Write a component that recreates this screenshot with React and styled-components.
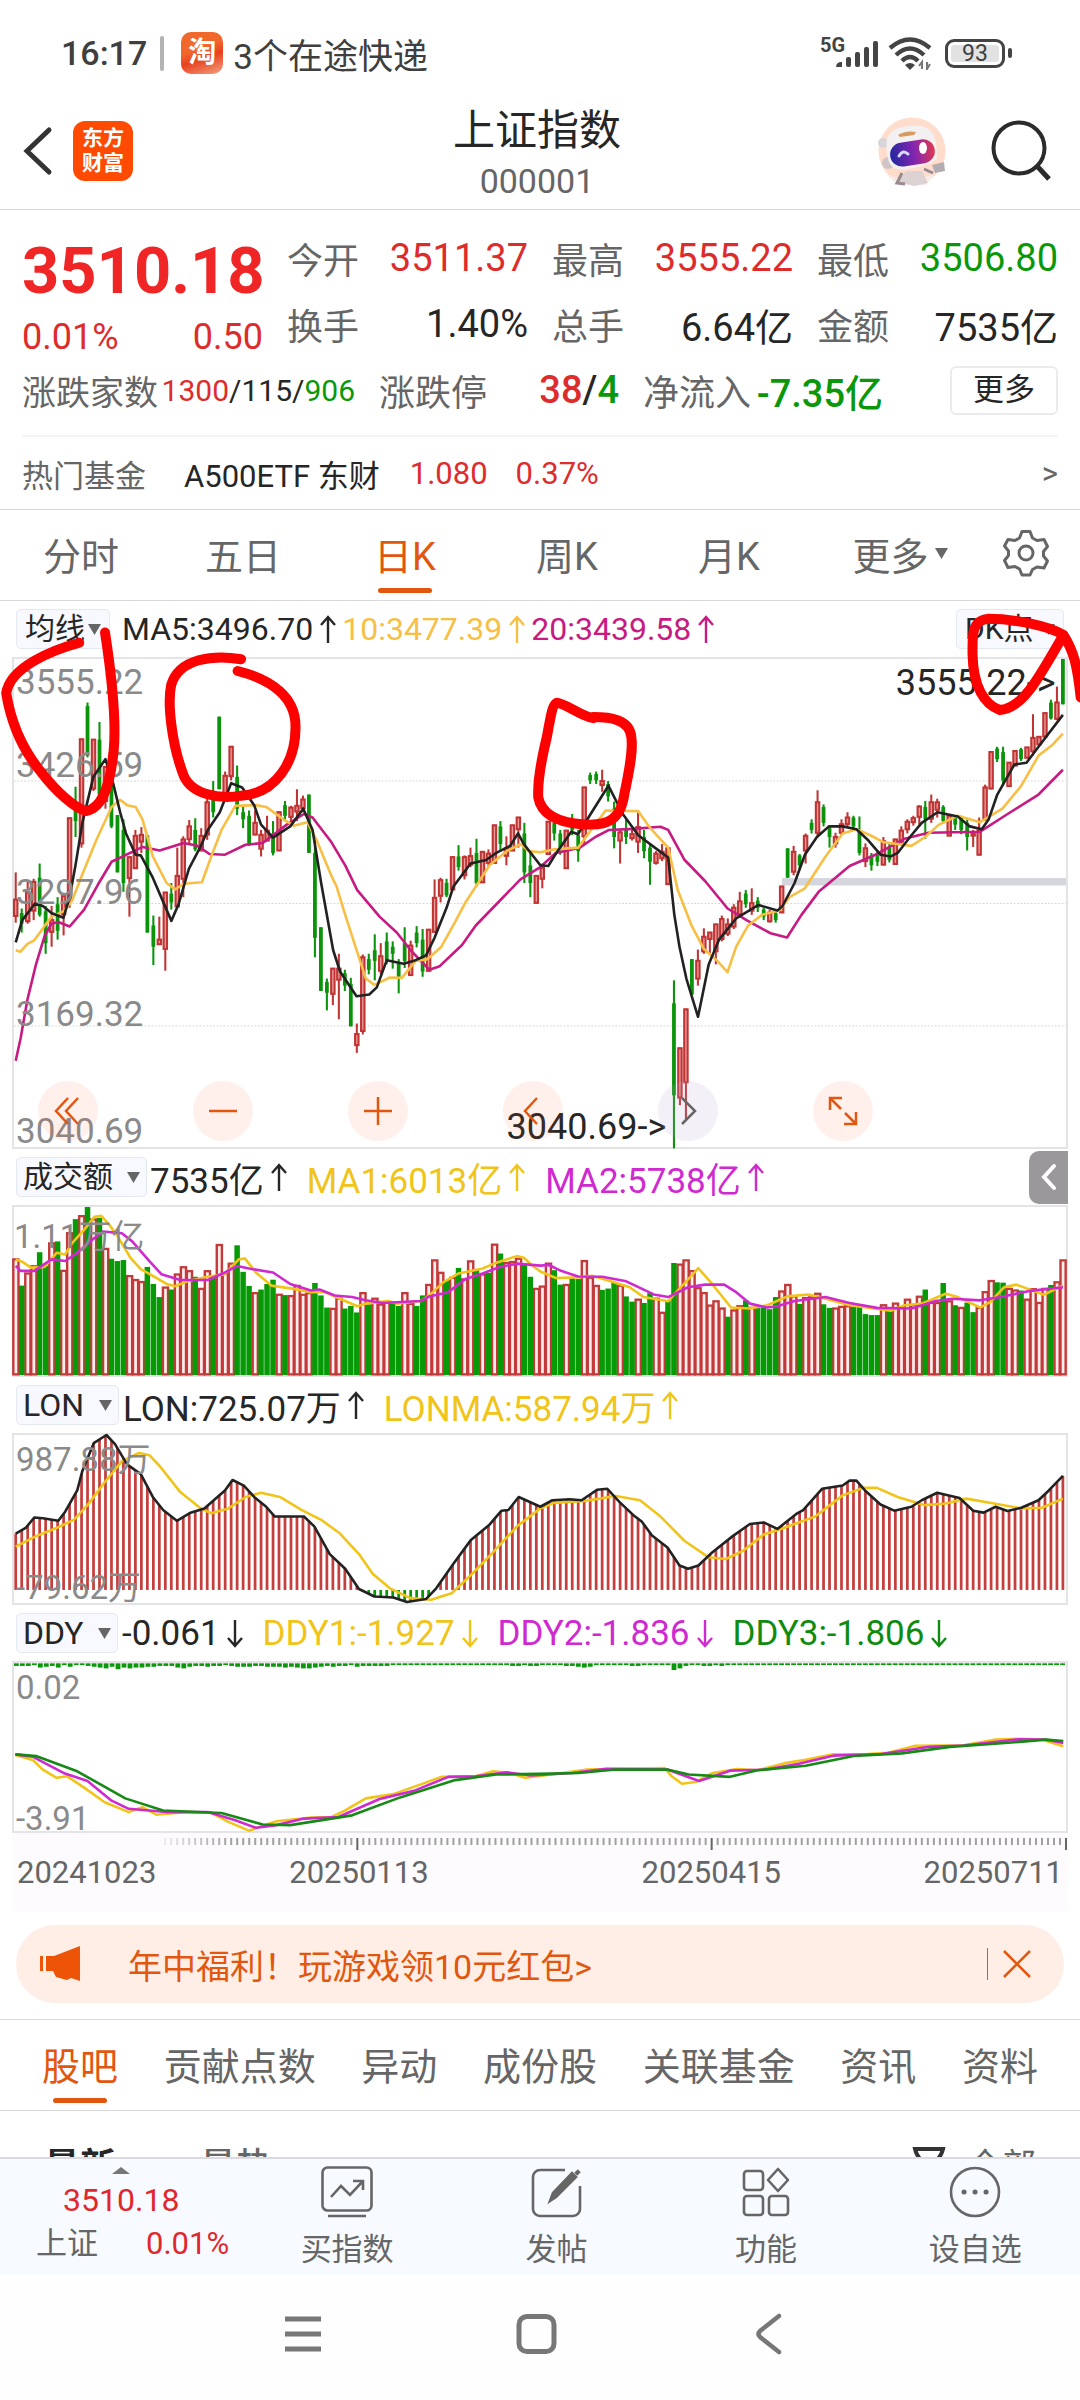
import React from "react";
import styled, { createGlobalStyle } from "styled-components";

const C = {
  ink: "#262626",
  sub: "#666666",
  axis: "#8a8a8a",
  red: "#dd2c2c",
  green: "#0a980a",
  orange: "#e2570f",
  yellow: "#f0c419",
  amber: "#f8bf45",
  violet: "#cf2ad0",
  magenta: "#c71a82",
  line: "#d8d8d8",
  chip: "#f7f9fe",
};

const Global = createGlobalStyle`
  *, *::before, *::after { box-sizing: border-box; }
  html, body { margin: 0; background: #fff; }
  body {
    font-family: Roboto, "Noto Sans CJK SC", sans-serif;
    color: ${C.ink};
    -webkit-font-smoothing: antialiased;
  }
  button, select { font: inherit; color: inherit; margin: 0; padding: 0; border: 0; background: none; }
  a { color: inherit; text-decoration: none; }
  dl, dd, dt, h1, p { margin: 0; font-weight: 400; }
  svg { display: block; }
`;

/* ---------- data ---------- */
const STEP = 3048 / 175;
const HALF = 1568;
const cx = (i) => 41 + STEP * i;
const parse = (s, off = 0) =>
  s.trim().split(/\s+/).map((p) => {
    const [x, y] = p.split(",").map(Number);
    return [x + off, y];
  });
const join = (left, right) => [...parse(left), ...parse(right, HALF)];
const toStr = (pts) => pts.map((p) => p.join(",")).join(" ");

const CANDLES = `R760,902,835,885 G862,930,875,905 R785,905,815,900 R778,895,785,870 G735,885,775,880 G855,990,870,960 R855,970,893,930 G830,950,850,925 R818,938,825,880 R605,860,605,840
G518,660,575,615 R382,690,382,680 G280,435,290,430 R383,530,383,525 G335,545,385,540 R460,580,460,560 G500,635,510,630 G598,760 G610,815,640,790 R715,885,715,778
R640,750,655,750 R632,705,652,675 G655,930 G882,1022,910,970 R885,965,948,965 R815,1038,815,978 G790,865,820,845 R690,858,768,858 R658,830,665,780 R612,680,628,668
G607,700,640,695 R635,700,655,700 R550,668,560,655 G502,605,550,590 G320,525 R475,540,485,540 R403,500,403,490 G458,598,490,580 G575,635,590,610 G585,685,600,680
R585,655,618,655 R640,715,652,695 R600,672,640,672 G615,712,650,705 R588,700 G558,610,570,600 R572,620,575,605 R525,615,570,590 R543,590,552,580 G540,705
G665,1000,705,945 G915,1095 G1060,1150,1070,1100 R1030,1135,1030,1105 R990,1175,1030,1065 G1035,1095,1045,1080 G1058,1195,1075,1195 R1187,1270,1215,1250 R992,1218,998,1210 G990,1048,1005,1035
G935,1065,980,1010 R960,1048,995,1040 G930,1020,955,1010 G955,1032,970,990 G1005,1102,1015,1060 G915,1030,960,1010 R953,1052,965,1052 G912,972,930,960 G920,1055,950,1040 R920,1040
R780,930,830,930 R775,845,780,828 G778,830,790,825 R715,810 G683,755,715,745 R712,780,715,770 R690,745,712,740 G665,800,705,790 R700,790 R695,745,705,735
R625,735 G615,700,630,680 R658,740,690,715 R625,700 R603,690,603,640 G620,790,650,760 G700,830,740,790 R768,848 R735,805,745,780 R615,710
G600,670,620,650 G640,710,650,690 R640,750 G595,655,610,640 G640,730,655,700 R518,680,518,660 G478,510,485,500 G475,510,482,500 R470,532,500,515 G502,560,510,545
G560,692,580,660 R640,735,645,672 G610,680,640,660 R640,670,650,665 R590,705,630,675 G640,720,660,700 G680,795,690,730 R700,738,705,735 R680,728,700,722 R690,795
G1065,1540,1130,1390 R1255,1418,1255,1398 R1145,1460,1145,1355 G1005,1105 R978,1080,1008,1062 R918,990,940,985 R928,990,928,950 R905,1020,905,985 R882,955,890,950 R890,940,905,935
R850,920,858,915 R815,885,840,880 G810,860,820,850 R805,880,845,870 G830,872,840,860 G860,895,865,885 R865,902,872,900 G870,902,875,895 R798,875 G692,775
R685,768,700,760 G708,750,712,740 R650,735,655,700 G610,650,620,640 R528,660,560,650 G568,630,575,620 G630,690,635,660 R648,690,658,680 R610,655,622,650 R590,630,603,625
G600,640,605,630 G602,712,640,705 R678,745,690,730 G705,755,712,740 G700,742,710,730 R660,740,670,740 G680,732,690,725 R665,738 R630,680,640,675 R610,650,615,640
R600,628,605,620 R570,625,572,605 G558,665,575,610 R540,620,560,610 R552,605,560,585 G570,622,575,615 R598,658 G600,640,605,625 G600,652,605,640 G610,698,620,660
R640,688,650,655 R605,712,640,712 R512,615,518,612 R418,525 G405,448,410,440 G405,515,420,500 R448,518 R415,460 G408,445,412,440 R405,438
R313,430,378,420 R375,400 R308,378 G272,328,280,325 R235,330,278,328 G157,285`
  .trim().split(/\s+/).map((t) => {
    const [h, l, o, c] = t.slice(1).split(",").map(Number);
    return { up: t[0] === "R", h, l, o: o ?? h, c: c ?? l };
  });

const VOLUMES = [352,435,395,373,333,375,303,300,387,272,232,220,195,230,228,320,353,360,357,403,415,421,378,430,470,438,447,398,376,388,408,442,388,410,308,395,365,312,393,436,455,447,430,417,460,464,464,433,460,455,427,465,502,503,472,505,497,517,455,492,472,490,482,490,497,455,488,497,465,430,355,393,418,408,381,413,358,388,398,396,307,337,363,360,350,370,408,442,435,365,388,432,430,412,415,357,408,433,448,444,425,432,468,484,475,488,458,472,515,480,366,368,355,388,440,455,493,480,502,530,508,495,480,500,500,503,507,470,450,430,465,491,470,468,457,492,503,502,497,495,500,500,522,525,525,492,512,487,500,475,492,466,447,485,485,427,480,495,500,487,516,500,452,418,425,426,442,447,450,475,443,485,442,433,422,355];
const DOWN = new Set([1,4,5,7,10,12,14,16,17,18,22,23,24,26,30,33,37,38,39,41,42,43,45,50,51,52,55,56,57,59,63,64,67,68,72,74,77,79,81,85,86,90,91,93,94,98,99,100,102,103,105,106,109,110,119,122,124,125,126,127,131,135,136,140,141,142,143,144,146,152,155,157,159,160,164,165,168,173]);

const MA5 = join(
  "41,958 60,895 80,870 97,848 120,855 145,875 180,888 198,830 215,740 235,620 267,490 302,440 325,510 345,590 362,650 390,710 405,712 440,775 494,897 515,850 545,750 580,685 600,640 635,590 668,508 700,520 735,570 755,625 790,662 840,630 878,580 905,640 930,790 965,980 985,1040 1033,1110 1070,1105 1092,1085 1121,1008 1170,1018 1200,1010 1235,995 1260,945 1295,860 1315,800 1365,735 1410,725 1440,705 1480,685 1503,650 1520,680 1568,740",
  "23,742 50,700 90,645 110,652 140,605 198,515 240,595 285,655 340,695 372,718 390,880 405,970 425,1060 459,1168 490,1020 520,950 570,890 635,852 690,868 705,855 740,790 770,710 805,660 840,630 880,630 920,638 955,670 990,710 1020,715 1040,705 1080,655 1110,620 1156,590 1215,602 1250,630 1285,638 1305,610 1330,540 1380,455 1415,450 1450,405 1521,315"
);
const MA10 = join(
  "41,980 55,984 75,962 95,952 115,925 145,885 180,870 205,840 235,765 275,670 320,575 345,555 365,570 390,575 410,610 440,715 480,790 505,808 530,792 583,788 610,715 640,640 680,572 740,570 770,575 820,610 850,628 890,618 915,665 960,770 975,800 1000,880 1040,1000 1060,1060 1085,1078 1130,1057 1165,1058 1205,1010 1240,1005 1280,970 1320,900 1350,845 1390,785 1420,740 1470,700 1510,680 1535,700 1568,703",
  "40,695 110,690 140,650 190,585 285,587 320,635 372,690 400,810 440,910 475,975 515,1010 545,1042 570,970 605,910 645,880 695,868 725,830 770,805 830,715 880,650 920,638 960,655 1000,675 1080,685 1120,660 1160,625 1215,600 1280,618 1345,580 1400,515 1450,430 1490,400 1521,368"
);
const MA20 = join(
  "41,1292 55,1230 75,1120 100,1020 125,940 145,905 165,900 198,913 240,865 280,795 320,730 385,700 410,688 460,698 530,677 570,685 605,708 650,710 710,682 760,677 830,625 880,595 905,605 960,675 1000,740 1035,810 1100,885 1150,930 1195,985 1245,1035 1275,1025 1340,965 1380,910 1440,850 1510,780 1568,745",
  "45,705 115,690 160,660 200,640 270,637 350,631 372,640 420,725 480,785 545,862 600,895 670,932 718,944 760,880 810,815 900,742 975,710 1060,665 1130,648 1280,645 1360,595 1450,540 1521,470"
);
const VOL1 = join(
  "41,355 60,362 85,380 125,378 160,335 185,340 205,305 240,265 270,225 290,222 310,245 335,280 375,350 405,385 440,405 480,430 505,437 545,420 600,408 650,400 690,355 708,352 740,395 785,435 850,445 900,455 940,455 985,475 1035,498 1060,490 1125,482 1150,490 1220,482 1245,465 1285,425 1330,398 1400,383 1440,365 1500,345 1520,350 1540,370 1568,392",
  "45,412 110,410 150,405 200,420 260,440 300,470 372,483 400,450 460,382 500,430 555,502 610,505 660,495 720,468 780,462 820,472 900,495 1020,512 1060,495 1110,490 1180,460 1215,470 1280,502 1310,485 1350,440 1385,432 1420,445 1465,463 1521,435"
);
const VOL2 = join(
  "41,375 55,390 95,390 145,355 185,360 220,335 270,290 295,270 350,275 380,300 430,360 465,400 520,418 600,418 650,395 685,375 720,383 790,395 840,430 900,450 925,447 970,465 1020,470 1060,480 1110,488 1220,482 1245,468 1300,455 1350,415 1400,398 1450,378 1500,368 1568,374",
  "25,372 60,390 110,407 180,408 250,422 330,462 372,470 430,440 480,432 535,432 570,455 610,490 660,502 690,498 740,482 830,470 900,488 980,503 1080,505 1150,482 1200,475 1280,480 1340,470 1420,452 1521,440"
);
const LON = join(
  "41,1182 70,1165 95,1133 120,1135 165,1143 185,1115 220,1050 235,990 268,905 305,880 330,908 365,970 405,1000 440,1070 470,1110 510,1143 550,1118 590,1105 650,1050 672,1018 705,1035 735,1070 770,1100 795,1130 880,1130 910,1160 955,1245 1000,1290 1040,1352 1085,1375 1140,1378 1180,1392 1235,1383 1265,1350 1315,1275 1365,1203 1420,1155 1455,1112 1475,1110 1505,1070 1568,1100",
  "35,1080 85,1077 120,1080 165,1048 195,1045 230,1085 270,1125 295,1145 325,1188 370,1225 405,1280 430,1290 460,1280 500,1240 560,1190 610,1153 650,1148 690,1168 745,1122 765,1110 820,1045 880,1035 900,1020 920,1020 945,1050 990,1093 1030,1112 1080,1100 1110,1080 1155,1057 1220,1073 1260,1112 1290,1118 1325,1100 1360,1113 1400,1103 1450,1080 1480,1050 1521,1005"
);
const LONMA = join(
  "41,1222 100,1190 160,1165 210,1140 250,1095 300,1025 350,960 400,935 430,942 460,975 520,1055 580,1105 610,1120 660,1105 710,1070 755,1057 810,1070 870,1108 930,1140 985,1182 1040,1245 1080,1305 1130,1350 1190,1380 1250,1385 1310,1365 1370,1305 1430,1240 1500,1160 1568,1105",
  "40,1088 130,1082 220,1067 290,1080 350,1130 420,1205 490,1255 540,1260 590,1235 650,1185 700,1168 800,1130 880,1065 940,1042 980,1042 1040,1070 1120,1095 1180,1090 1240,1075 1320,1090 1400,1105 1460,1103 1521,1075"
);
const DDY1 = parse("20,465 45,480 60,510 80,535 95,530 120,565 150,610 185,640 205,625 225,648 270,640 305,642 330,670 360,697 400,668 450,657 480,655 500,635 530,598 570,585 610,555 640,532 690,530 715,515 740,520 762,535 800,525 850,510 900,507 965,505 975,530 990,553 1010,548 1035,520 1070,508 1100,512 1140,490 1170,480 1210,463 1260,462 1290,458 1330,437 1400,435 1445,418 1480,415 1515,418 1545,438");
const DDY2 = parse("20,463 45,470 90,520 125,545 160,605 185,630 240,640 300,640 340,665 370,688 400,680 440,660 490,655 550,600 600,575 650,532 690,530 735,518 770,528 830,520 880,507 970,510 1015,545 1060,513 1110,510 1160,492 1210,467 1280,462 1350,440 1400,436 1480,417 1520,418 1545,428");
const DDY3 = parse("20,463 50,468 110,515 180,598 235,635 320,643 380,678 420,680 510,650 580,595 660,542 720,525 780,523 840,520 890,510 970,510 1000,525 1060,532 1100,512 1170,498 1240,468 1310,460 1380,440 1450,430 1520,418 1545,422");
const DDY_BARS = "2221432413112345364544332224532232212333223334345543232213222221000000111111111111122122110122343111110221111101211221211101".split("").map(Number);

const valueAt = (pts, x) => {
  for (let i = 1; i < pts.length; i++) {
    if (x <= pts[i][0]) {
      const [a, b] = [pts[i - 1], pts[i]];
      return a[1] + ((b[1] - a[1]) * (x - a[0])) / (b[0] - a[0]);
    }
  }
  return pts[pts.length - 1][1];
};

/* ---------- frame ---------- */
const Page = styled.div`
  display: flex;
  flex-direction: column;
  height: 100vh;
  overflow: hidden;
  white-space: nowrap;
`;
const Content = styled.main`
  flex: 1;
  min-height: 0;
  overflow: hidden;
`;
const StatusBar = styled.div`
  display: flex;
  align-items: center;
  justify-content: space-between;
  height: 96px;
  padding: 10px 68px 0 61px;
  color: #3f3f3f;
  font-size: 34px;
  font-weight: 500;
`;
const StatusGroup = styled.div`
  display: flex;
  align-items: center;
  gap: ${(p) => p.$gap}px;
`;
const StatusRule = styled.i`
  width: 4px;
  height: 35px;
  border-radius: 2px;
  background: #b3b3b3;
`;
const AppBadge = styled.span`
  display: grid;
  place-items: center;
  width: 42px;
  height: 42px;
  margin-left: 4px;
  border-radius: 10px;
  background: linear-gradient(160deg, #f0682c 40%, #e8411f 60%, #f3a27f);
  color: #fff;
  font-size: 28px;
  font-weight: 700;
  line-height: 42px;
`;
const Notice = styled.span`
  margin-left: -3px;
  font-size: 35px;
  font-weight: 400;
`;
const Battery = styled.span`
  display: grid;
  place-items: center;
  width: 60px;
  height: 29px;
  margin-left: 3px;
  border: 3px solid #444;
  border-radius: 9px;
  background: #e2e2e2;
  box-shadow: inset 0 0 0 3px #fff;
  font-size: 23px;
  font-weight: 400;
  line-height: 23px;
`;
const BatteryTip = styled.i`
  width: 4px;
  height: 10px;
  margin-left: -7px;
  border-radius: 2px;
  background: #444;
`;
const Header = styled.header`
  display: grid;
  grid-template-columns: 1fr auto 1fr;
  align-items: center;
  height: 114px;
  padding: 0 28px 0 22px;
  border-bottom: 1px solid ${C.line};
`;
const HeaderSide = styled.div`
  display: flex;
  align-items: center;
  justify-content: ${(p) => (p.$end ? "flex-end" : "flex-start")};
  gap: ${(p) => (p.$end ? 44 : 19)}px;
  padding-bottom: 4px;
`;
const IconButton = styled.button`
  display: grid;
  place-items: center;
  cursor: pointer;
`;
const Brand = styled.a`
  display: grid;
  place-content: center;
  width: 60px;
  height: 60px;
  border-radius: 12px;
  background: #fe4a02;
  color: #fff;
  font-size: 21px;
  font-weight: 700;
  line-height: 25px;
  text-align: center;
`;
const Title = styled.h1`
  color: ${C.ink};
  font-size: 42px;
  line-height: 56px;
  text-align: center;
`;
const Code = styled.p`
  color: ${C.sub};
  font-size: 34px;
  line-height: 44px;
  text-align: center;
`;

/* ---------- quote ---------- */
const tone = { up: C.red, down: C.green, ink: C.ink, sub: C.sub };
const Quote = styled.section`
  padding: 15px 22px 0;
`;
const QuoteGrid = styled.div`
  display: grid;
  grid-template-columns: repeat(4, minmax(0, 1fr));
  grid-template-rows: 66px 66px;
  column-gap: 24px;
`;
const PriceCell = styled.div`
  grid-row: span 2;
`;
const Price = styled.p`
  color: #f02525;
  font-size: 65px;
  font-weight: 700;
  line-height: 92px;
`;
const Spread = styled.div`
  display: flex;
  justify-content: space-between;
  color: ${C.red};
  font-size: 36px;
  line-height: 40px;
`;
const Pair = styled.dl`
  display: flex;
  align-items: center;
  justify-content: space-between;
  & dt { color: ${C.sub}; font-size: ${(p) => (p.$small ? 34 : 36)}px; }
  & dd { color: ${(p) => tone[p.$tone || "ink"]}; font-size: ${(p) => (p.$small ? 30 : 38)}px; font-weight: ${(p) => (p.$bold ? 500 : 400)}; }
`;
const Tone = styled.span`
  color: ${(p) => tone[p.$tone]};
`;
const BreadthRow = styled.div`
  display: grid;
  grid-template-columns: 333fr 240fr 240fr 151fr;
  align-items: center;
  column-gap: 24px;
  height: 80px;
  padding-bottom: 12px;
  border-bottom: 2px solid #f4f4f4;
`;
const MoreButton = styled.button`
  justify-self: end;
  width: 108px;
  height: 49px;
  border: 2px solid #ebebeb;
  border-radius: 6px;
  font-size: 31px;
  line-height: 44px;
`;
const FundRow = styled.a`
  display: flex;
  align-items: center;
  height: 73px;
  padding: 0 22px;
  border-bottom: 1px solid ${C.line};
  font-size: 31px;
`;
const FundCell = styled.span`
  margin-right: ${(p) => p.$gap}px;
  color: ${(p) => tone[p.$tone || "ink"]};
`;
const Push = styled.span`
  margin-left: auto;
  color: ${C.sub};
`;

/* ---------- tabs ---------- */
const PeriodBar = styled.nav`
  display: grid;
  grid-template-columns: repeat(6, 162fr) 108fr;
  height: 90px;
`;
const Tab = styled.button`
  position: relative;
  display: flex;
  align-items: center;
  justify-content: center;
  gap: 6px;
  padding: 0 0 4px ${(p) => (p.$menu ? 18 : 0)}px;
  color: ${(p) => (p.$active ? C.orange : C.sub)};
  font-size: 38px;
  &::after {
    content: "";
    position: absolute;
    bottom: 7px;
    left: 50%;
    width: 54px;
    height: 5px;
    margin-left: -27px;
    border-radius: 3px;
    background: ${(p) => (p.$active ? C.orange : "transparent")};
  }
`;
const BoardBar = styled.nav`
  display: flex;
  justify-content: space-between;
  height: 91px;
  padding: 0 42px;
  border-bottom: 1px solid ${C.line};
`;

/* ---------- charts ---------- */
const ChartBlock = styled.section`
  position: relative;
  border-top: ${(p) => (p.$rule ? `1px solid ${C.line}` : 0)};
`;
const Legend = styled.div`
  display: flex;
  align-items: center;
  height: 56px;
  padding: 0 16px;
  font-size: ${(p) => p.$size || 35}px;
`;
const LegendItem = styled.span`
  display: flex;
  align-items: center;
  gap: 6px;
  margin-left: ${(p) => p.$gap}px;
  color: ${(p) => p.$color || C.ink};
`;
const Chip = styled.label`
  display: flex;
  align-items: center;
  gap: ${(p) => p.$gap ?? 14}px;
  height: 40px;
  margin-left: ${(p) => (p.$end ? "auto" : 0)};
  padding: 0 ${(p) => (p.$tight ? 6 : 8)}px;
  border: 1px solid #e4e8f1;
  border-radius: 5px;
  background: ${C.chip};
  font-size: ${(p) => (p.$latin ? 32 : 30)}px;
  color: ${C.ink};
`;
const ChipSelect = styled.select`
  appearance: none;
  outline: none;
  line-height: 36px;
`;
const Plot = styled.div`
  position: relative;
  height: ${(p) => p.$h}px;
  margin: 0 12px;
  border: 2px solid #e4e4e6;
  & > svg { width: 100%; height: 100%; overflow: visible; }
  & polyline { fill: none; vector-effect: non-scaling-stroke; stroke-width: 2.6; stroke-linejoin: round; }
`;
const AxisLabel = styled.span`
  position: absolute;
  left: ${(p) => p.$left ?? 2}px;
  top: ${(p) => p.$top}%;
  color: ${(p) => (p.$ink ? C.ink : C.axis)};
  font-size: ${(p) => p.$size || 35}px;
  line-height: 40px;
  transform: translateY(-50%);
`;
const Callout = styled(AxisLabel)`
  left: auto;
  right: ${(p) => p.$right}%;
`;
const Tools = styled.div`
  position: absolute;
  left: 2px;
  right: 171px;
  top: 422px;
  display: flex;
  justify-content: space-between;
  padding: 0 22px;
`;
const Tool = styled.button`
  display: grid;
  place-items: center;
  width: 60px;
  height: 60px;
  border-radius: 50%;
  background: ${(p) => (p.$dim ? "rgba(190,165,205,.17)" : "rgba(255,90,40,.09)")};
  color: ${(p) => (p.$dim ? C.sub : C.orange)};
`;
const Markup = styled.svg`
  position: absolute;
  left: 0;
  top: 0;
  width: 100%;
  height: 560px;
  pointer-events: none;
  & path { fill: none; stroke: #fd0000; stroke-width: 10; stroke-linecap: round; stroke-linejoin: round; vector-effect: non-scaling-stroke; }
`;
const SideTab = styled.button`
  display: grid;
  place-items: center;
  width: 39px;
  height: 53px;
  margin-left: auto;
  margin-right: -4px;
  border-radius: 10px 0 0 10px;
  background: #9a989b;
`;
const TimeAxis = styled.div`
  margin: 0 12px;
  padding-top: 5px;
  height: 78px;
  background: #fdfbfd;
  & svg { width: 100%; height: 12px; }
`;
const Dates = styled.div`
  display: grid;
  grid-template-columns: 272fr 352fr 421fr;
  padding: 3px 5px 0;
  color: ${C.sub};
  font-size: 31px;
  line-height: 40px;
`;
const LastDates = styled.div`
  display: flex;
  justify-content: space-between;
`;

/* ---------- bottom ---------- */
const Banner = styled.aside`
  display: flex;
  align-items: center;
  height: 78px;
  margin: 14px 16px 16px;
  padding: 0 32px 0 24px;
  border-radius: 39px;
  background: #ffeee6;
  color: ${C.orange};
  font-size: 34px;
  & a { margin-left: 46px; }
  & button { margin-left: auto; padding-left: 14px; border-left: 1px solid ${C.orange}; }
`;
const BoardWrap = styled.div`
  border-top: 1px solid ${C.line};
`;
const SortRow = styled.div`
  display: flex;
  align-items: center;
  height: 104px;
  padding: 0 44px;
  color: ${C.sub};
  font-size: 36px;
  & button:nth-child(2) { margin-left: 84px; font-weight: 500; }
  & button:nth-child(3) { display: flex; align-items: center; gap: 22px; margin-left: auto; font-size: 34px; }
`;
const SortActive = styled.button`
  color: ${C.ink};
  font-weight: 700;
`;
const BottomBar = styled.footer`
  display: grid;
  grid-template-columns: 242fr repeat(4, 209fr);
  height: 118px;
  border-top: 2px solid #d9dae2;
  background: #f7faff;
  color: ${C.sub};
  font-size: 31px;
`;
const IndexCell = styled.button`
  display: flex;
  flex-direction: column;
  align-items: center;
  padding-top: 8px;
  color: #e0282c;
  font-size: 32px;
  line-height: 38px;
  & > strong { margin-top: 6px; font-weight: 400; line-height: 40px; }
`;
const IndexLine = styled.span`
  display: flex;
  align-self: flex-start;
  gap: 48px;
  margin-top: 3px;
  padding-left: 36px;
  font-size: 31px;
  line-height: 42px;
`;
const NavItem = styled.button`
  display: flex;
  flex-direction: column;
  align-items: center;
  gap: 10px;
  padding-top: 7px;
  line-height: 44px;
`;
const SystemNav = styled.nav`
  display: flex;
  justify-content: center;
  align-items: center;
  gap: 173px;
  height: 125px;
  padding: 0 8px 8px 0;
  background: #fefefe;
`;

/* ---------- drawings ---------- */
const Caret = ({ w = 13 }) => (
  <svg width={w} height="13" viewBox="0 0 12 12"><path d="M0 1h12L6 11z" fill="#666" /></svg>
);
const Arrow = ({ down }) => (
  <svg width="18" height="30" viewBox="0 0 18 30" fill="none" stroke="currentColor" strokeWidth="2.4">
    <path d={down ? "M9 2v26M2 20l7 8 7-8" : "M9 29V3M2 11l7-8 7 8"} />
  </svg>
);
const Signal = () => (
  <svg width="58" height="44" viewBox="0 -6 58 44" fill="#444">
    <path d="M16 30a5 5 0 0 1 6-5v5z" />
    <rect x="26" y="20" width="5" height="10" rx="2" />
    <rect x="35" y="15" width="5" height="15" rx="2" />
    <rect x="44" y="10" width="5" height="20" rx="2" />
    <rect x="53" y="4" width="5" height="26" rx="2" />
    <text x="0" y="15" fontSize="20" fontWeight="700" fontFamily="Roboto, sans-serif">5G</text>
  </svg>
);
const Wifi = () => (
  <svg width="44" height="33" viewBox="0 0 44 33" fill="none" stroke="#444" strokeWidth="4.400">
    <path d="M2 11Q22-6 42 11M8 18Q22 5 36 18M14 24Q22 16 30 24" />
    <path d="M17 28q5-4 10 0l-5 5z" fill="#444" stroke="none" />
    <path d="M34 32v-7l-3 4M39 25v7l3-5" stroke="#777" strokeWidth="2" />
  </svg>
);
const Robot = () => (
  <svg width="68" height="70" viewBox="0 0 68 70">
    <defs>
      <linearGradient id="visor" x1="0" x2="1"><stop offset="0" stopColor="#2427a0" /><stop offset=".55" stopColor="#8526b0" /><stop offset="1" stopColor="#e03a50" /></linearGradient>
    </defs>
    <circle cx="34" cy="35" r="33.5" fill="#ffdccb" />
    <path d="M6 56q20 14 50 2l-8 11H20z" fill="#f7ece8" />
    <circle cx="5" cy="27" r="5" fill="#d9d4d8" />
    <circle cx="10" cy="47" r="6" fill="#cfc5c6" />
    <path d="M9 23Q13 11 31 10q20-3 25 10 3 8 3 22-4 6-24 10-20 5-24-6-4-13-2-23z" fill="#f3f0f2" />
    <path d="M20 19q8-5 18-3l-2 3-14 2z" fill="#d99a62" />
    <rect x="12" y="25" width="45" height="24" rx="12" fill="url(#visor)" transform="rotate(-9 34 37)" />
    <path d="M21 40q4-7 9-2" fill="none" stroke="#d9d9ff" strokeWidth="3" strokeLinecap="round" />
    <ellipse cx="45" cy="32" rx="4" ry="6" fill="#fff" />
    <path d="M28 55h16l6 12-14 3-16-4z" fill="#dcd2d2" />
    <path d="M24 57l-5 10 8 1M46 53l9 4" stroke="#958b90" strokeWidth="3" fill="none" />
    <path d="M54 49l12-3 1 9-10 2z" fill="#b4acb3" />
  </svg>
);
const Gear = () => (
  <svg width="48" height="48" viewBox="0 0 48 48" fill="none" stroke="#666" strokeWidth="3" strokeLinejoin="round">
    <path d="M20 2.500h8l2.500 6.500 4.500 2.500 7-1 3.500 7-4 5v4.500l4 5-3.500 7-7-1-4.500 2.500-2.500 5.500h-8L17.500 40 13 37.500l-7 1-3.500-7 4-5V22l-4-5L6 10.500l7 1L17.500 9z" />
    <circle cx="24" cy="24" r="7" />
  </svg>
);

const LegendArrowItem = ({ gap, color, down, children }) => (
  <LegendItem $gap={gap} $color={color}>
    {children}
    <Arrow down={down} />
  </LegendItem>
);

const Picker = ({ label, value, ...rest }) => (
  <Chip {...rest}>
    <ChipSelect aria-label={label} defaultValue={value}>
      <option>{value}</option>
    </ChipSelect>
    <Caret />
  </Chip>
);

const KLine = () => (
  <svg viewBox="36 157 3062 1379" preserveAspectRatio="none">
    {[502, 848, 1194].map((y) => (
      <path key={y} d={`M36 ${y}H3098`} stroke="#d4d4d4" strokeWidth="3" strokeDasharray="5 5" />
    ))}
    <rect x="2271" y="776" width="827" height="21" fill="#d5d5de" />
    {CANDLES.map((c, i) =>
      c.up ? (
        <g key={i} stroke="#c03434">
          <path d={`M${cx(i)} ${c.h}V${c.l}`} strokeWidth="6" />
          <rect x={cx(i) - 5} y={c.o + 2} width="10" height={Math.max(c.c - c.o - 4, 4)} fill="#e89a9a" strokeWidth="6" />
        </g>
      ) : (
        <g key={i} fill="#0b930b">
          <rect x={cx(i) - 3} y={c.h} width="6" height={c.l - c.h} />
          <rect x={cx(i) - 5.500} y={c.o} width="11" height={c.c - c.o} />
        </g>
      )
    )}
    <polyline points={toStr(MA20)} stroke={C.magenta} />
    <polyline points={toStr(MA10)} stroke={C.amber} />
    <polyline points={toStr(MA5)} stroke="#222" />
  </svg>
);

const VolumeChart = () => (
  <svg viewBox="36 195 3062 513" preserveAspectRatio="none">
    {VOLUMES.map((y, i) =>
      DOWN.has(i) ? null : (
        <rect key={i} x={cx(i) - 7} y={y + 3} width="15" height={703 - y} fill="#ffecec" stroke="#c23a3a" strokeWidth="7" />
      )
    )}
    {VOLUMES.map((y, i) =>
      DOWN.has(i) ? <rect key={i} x={cx(i) - 8} y={y} width="16" height={708 - y} fill="#079a07" /> : null
    )}
    <polyline points={toStr(VOL1)} stroke={C.yellow} />
    <polyline points={toStr(VOL2)} stroke={C.violet} />
  </svg>
);

const LonChart = () => (
  <svg viewBox="36 880 3062 515" preserveAspectRatio="none">
    {CANDLES.map((_, i) => {
      const y = valueAt(LON, cx(i));
      return <path key={i} d={`M${cx(i)} ${y}V1355`} stroke={y < 1355 ? "#c4403e" : C.green} strokeWidth="8" />;
    })}
    <polyline points={toStr(LONMA)} stroke={C.yellow} />
    <polyline points={toStr(LON)} stroke="#222" />
  </svg>
);

const DdyChart = () => (
  <svg viewBox="18 183 1531 515" preserveAspectRatio="none">
    {CANDLES.map((_, i) => {
      const k = i === 110 ? 7 : i === 111 ? 5 : DDY_BARS[Math.min(i, DDY_BARS.length - 1)] || 1;
      return <rect key={i} x={18 + i * 8.700} y="184" width="7" height={3 + k * 2.500} fill={C.green} />;
    })}
    <polyline points={toStr(DDY1)} stroke={C.yellow} />
    <polyline points={toStr(DDY2)} stroke={C.violet} />
    <polyline points={toStr(DDY3)} stroke="#158a15" />
  </svg>
);

const Ruler = () => (
  <svg viewBox="0 0 1055 12" preserveAspectRatio="none" stroke="#a0a0a0" strokeWidth="2">
    {Array.from({ length: 151 }, (_, k) => {
      const x = 153 + k * 6;
      const major = k === 32 || k === 91 || k === 150;
      return (
        <path key={k} d={`M${x} 0V${major ? 12 : 7}`} opacity={Math.min(1, 0.2 + k / 14)} stroke={major ? "#666" : undefined} />
      );
    })}
  </svg>
);

const NAV = [
  ["买指数", <><rect x="1.500" y="1.500" width="49" height="43" rx="5" /><path d="M10 31l10-11 9 9 13-14M32 15h10v9M7 50h38" /></>],
  ["发帖", <><path d="M34 4H9a7 7 0 0 0-7 7v32a7 7 0 0 0 7 7h33a7 7 0 0 0 7-7V20" /><path d="M19 35l3-8 19-20 4 4-20 20z" fill="#666" /><path d="M45 5l3 3" strokeWidth="5" /></>],
  ["功能", <><rect x="4" y="5" width="19" height="19" rx="3" /><path d="M38 3l10 11-10 11-10-11z" strokeLinejoin="round" /><rect x="4" y="30" width="19" height="19" rx="3" /><rect x="29" y="30" width="19" height="19" rx="3" /></>],
  ["设自选", <><circle cx="26" cy="26" r="24" /><path d="M15 26h.1M26 26h.1M37 26h.1" strokeWidth="5" strokeLinecap="round" /></>],
];

export default function App() {
  return (
    <Page>
      <Global />
      <Content>
        <StatusBar>
          <StatusGroup $gap={13}>
            <span>16:17</span>
            <StatusRule />
            <AppBadge>淘</AppBadge>
            <Notice>3个在途快递</Notice>
          </StatusGroup>
          <StatusGroup $gap={10}>
            <Signal />
            <Wifi />
            <Battery>93</Battery>
            <BatteryTip />
          </StatusGroup>
        </StatusBar>
        <Header>
          <HeaderSide>
            <IconButton aria-label="返回">
              <svg width="32" height="50" viewBox="0 0 32 50" fill="none" stroke="#333" strokeWidth="5" strokeLinecap="round"><path d="M27 4L5 25l22 21" /></svg>
            </IconButton>
            <Brand href="#home">东方<br />财富</Brand>
          </HeaderSide>
          <div>
            <Title>上证指数</Title>
            <Code>000001</Code>
          </div>
          <HeaderSide $end>
            <IconButton aria-label="助手"><Robot /></IconButton>
            <IconButton aria-label="搜索">
              <svg width="62" height="62" viewBox="0 0 62 62" fill="none" stroke="#2b2b2b" strokeWidth="4"><circle cx="29" cy="28" r="25.500" /><path d="M47 46l12 13" strokeWidth="5" /></svg>
            </IconButton>
          </HeaderSide>
        </Header>

        <Quote>
          <QuoteGrid>
            <PriceCell>
              <Price>3510.18</Price>
              <Spread><span>0.01%</span><span>0.50</span></Spread>
            </PriceCell>
            <Pair $tone="up"><dt>今开</dt><dd>3511.37</dd></Pair>
            <Pair $tone="up"><dt>最高</dt><dd>3555.22</dd></Pair>
            <Pair $tone="down"><dt>最低</dt><dd>3506.80</dd></Pair>
            <Pair><dt>换手</dt><dd>1.40%</dd></Pair>
            <Pair><dt>总手</dt><dd>6.64亿</dd></Pair>
            <Pair><dt>金额</dt><dd>7535亿</dd></Pair>
          </QuoteGrid>
          <BreadthRow>
            <Pair $small>
              <dt>涨跌家数</dt>
              <dd><Tone $tone="up">1300</Tone>/115/<Tone $tone="down">906</Tone></dd>
            </Pair>
            <Pair $bold><dt>涨跌停</dt><dd><Tone $tone="up">38</Tone>/<Tone $tone="down">4</Tone></dd></Pair>
            <Pair $bold $tone="down"><dt>净流入</dt><dd>-7.35亿</dd></Pair>
            <MoreButton>更多</MoreButton>
          </BreadthRow>
        </Quote>
        <FundRow href="#fund">
          <FundCell $tone="sub" $gap={38}>热门基金</FundCell>
          <FundCell $gap={30}>A500ETF 东财</FundCell>
          <FundCell $tone="up" $gap={28}>1.080</FundCell>
          <FundCell $tone="up" $gap={0}>0.37%</FundCell>
          <Push>&gt;</Push>
        </FundRow>

        <PeriodBar>
          {["分时", "五日", "日K", "周K", "月K"].map((t) => (
            <Tab key={t} $active={t === "日K"}>{t}</Tab>
          ))}
          <Tab $menu>更多<Caret /></Tab>
          <Tab aria-label="设置"><Gear /></Tab>
        </PeriodBar>

        <ChartBlock $rule>
          <Legend $size={32}>
            <Picker label="均线" value="均线" $gap={3} />
            <LegendArrowItem gap={12}>MA5:3496.70</LegendArrowItem>
            <LegendArrowItem gap={5} color={C.amber}>10:3477.39</LegendArrowItem>
            <LegendArrowItem gap={5} color={C.magenta}>20:3439.58</LegendArrowItem>
            <Picker label="DK点" value="DK点" $gap={8} $end />
          </Legend>
          <Plot $h={492}>
            <KLine />
            <AxisLabel $top={5}>3555.22</AxisLabel>
            <AxisLabel $top={22}>3426.59</AxisLabel>
            <AxisLabel $top={48}>3297.96</AxisLabel>
            <AxisLabel $top={73}>3169.32</AxisLabel>
            <AxisLabel $top={97}>3040.69</AxisLabel>
            <Callout $ink $top={5} $right={1} $size={36}>3555.22-&gt;</Callout>
            <Callout $ink $top={96} $right={38} $size={36}>3040.69-&gt;</Callout>
            <Tools>
              <Tool aria-label="最左"><svg width="28" height="30" fill="none" stroke="currentColor" strokeWidth="2.500"><path d="M14 2L2 15l12 13M24 2L12 15l12 13" /></svg></Tool>
              <Tool aria-label="缩小"><svg width="28" height="28" fill="none" stroke="currentColor" strokeWidth="2.500"><path d="M0 14h28" /></svg></Tool>
              <Tool aria-label="放大"><svg width="28" height="28" fill="none" stroke="currentColor" strokeWidth="2.500"><path d="M0 14h28M14 0v28" /></svg></Tool>
              <Tool aria-label="左移"><svg width="28" height="30" fill="none" stroke="currentColor" strokeWidth="2.500"><path d="M18 2L6 15l12 13" /></svg></Tool>
              <Tool aria-label="右移" $dim><svg width="28" height="30" fill="none" stroke="currentColor" strokeWidth="2.500"><path d="M8 2l13 13L8 28" /></svg></Tool>
              <Tool aria-label="全屏"><svg width="30" height="30" fill="none" stroke="currentColor" strokeWidth="2.500"><path d="M2 14V2h12M2 2l11 11M28 16v12H16M28 28L17 17" /></svg></Tool>
            </Tools>
          </Plot>
          <Markup viewBox="0 0 3136 1568" preserveAspectRatio="none">
            <path d="M230 117C150 138 30 185 18 258C30 330 60 410 120 480C160 530 215 580 250 588C300 580 320 510 330 420C340 320 318 170 305 88" />
            <path d="M700 163C620 150 520 160 497 235C485 290 500 400 530 480C550 545 640 555 700 545C800 540 860 450 858 350C858 270 790 220 690 196" />
            <path d="M1723 328C1690 325 1640 285 1616 285C1603 290 1598 330 1588 380C1573 440 1560 500 1563 550C1573 600 1628 620 1688 625C1768 632 1803 610 1813 540C1833 450 1838 410 1833 380C1828 330 1768 325 1723 325" />
            <path d="M3088 95C3048 70 2948 50 2868 50C2823 55 2823 90 2824 150C2826 240 2858 290 2903 305C2968 300 3008 230 3088 95C3118 140 3128 180 3138 270" />
          </Markup>
        </ChartBlock>

        <ChartBlock>
          <Legend>
            <Picker label="成交额" value="成交额" $tight />
            <LegendArrowItem gap={3}>7535亿</LegendArrowItem>
            <LegendArrowItem gap={19} color={C.yellow}>MA1:6013亿</LegendArrowItem>
            <LegendArrowItem gap={19} color={C.violet}>MA2:5738亿</LegendArrowItem>
            <SideTab aria-label="展开">
              <svg width="16" height="28" viewBox="0 0 16 28" fill="none" stroke="#fff" strokeWidth="4" strokeLinecap="round"><path d="M13 3L3 14l10 11" /></svg>
            </SideTab>
          </Legend>
          <Plot $h={172}>
            <VolumeChart />
            <AxisLabel $top={18} $left={0} $size={33}>1.11万亿</AxisLabel>
          </Plot>
        </ChartBlock>

        <ChartBlock>
          <Legend>
            <Picker label="指标 LON" value="LON" $tight $latin />
            <LegendArrowItem gap={4}>LON:725.07万</LegendArrowItem>
            <LegendArrowItem gap={19} color={C.yellow}>LONMA:587.94万</LegendArrowItem>
          </Legend>
          <Plot $h={172}>
            <LonChart />
            <AxisLabel $top={15} $size={33}>987.88万</AxisLabel>
            <AxisLabel $top={91} $size={33}>-79.62万</AxisLabel>
          </Plot>
        </ChartBlock>

        <ChartBlock>
          <Legend>
            <Picker label="指标 DDY" value="DDY" $tight $latin />
            <LegendArrowItem down gap={4}>-0.061</LegendArrowItem>
            <LegendArrowItem down gap={19} color={C.yellow}>DDY1:-1.927</LegendArrowItem>
            <LegendArrowItem down gap={19} color={C.violet}>DDY2:-1.836</LegendArrowItem>
            <LegendArrowItem down gap={19} color="#0f8c0f">DDY3:-1.806</LegendArrowItem>
          </Legend>
          <Plot $h={172}>
            <DdyChart />
            <AxisLabel $top={15} $size={33}>0.02</AxisLabel>
            <AxisLabel $top={93} $size={33}>-3.91</AxisLabel>
          </Plot>
          <TimeAxis>
            <Ruler />
            <Dates>
              <time>20241023</time>
              <time>20250113</time>
              <LastDates>
                <time>20250415</time>
                <time>20250711</time>
              </LastDates>
            </Dates>
          </TimeAxis>
        </ChartBlock>

        <Banner>
          <svg width="42" height="36" viewBox="0 0 42 36" fill="#ee5407"><path d="M0 10h3v15H0zM6 10h8L40 0v35l-9-3-4 2-11-3-3-6H6z" /></svg>
          <a href="#promo">年中福利！玩游戏领10元红包&gt;</a>
          <button aria-label="关闭">
            <svg width="30" height="32" viewBox="0 0 30 32" fill="none" stroke="currentColor" strokeWidth="2.500"><path d="M2 3l26 26M28 3L2 29" /></svg>
          </button>
        </Banner>

        <BoardWrap>
          <BoardBar>
            {["股吧", "贡献点数", "异动", "成份股", "关联基金", "资讯", "资料"].map((t, i) => (
              <Tab key={t} $active={i === 0}>{t}</Tab>
            ))}
          </BoardBar>
          <SortRow>
            <SortActive>最新</SortActive>
            <button>最热</button>
            <button>
              <svg width="34" height="34" viewBox="0 0 34 34" fill="none" stroke="#333" strokeWidth="4"><path d="M3 3h28q-2 9-10 14v13l-8-4v-9Q5 12 3 3z" /></svg>
              全部
            </button>
          </SortRow>
        </BoardWrap>
      </Content>

      <BottomBar>
        <IndexCell>
          <svg width="18" height="7" viewBox="0 0 18 7"><path d="M0 7L9 0l9 7z" fill="#777" /></svg>
          <strong>3510.18</strong>
          <IndexLine><Tone $tone="sub">上证</Tone><span>0.01%</span></IndexLine>
        </IndexCell>
        {NAV.map(([label, art]) => (
          <NavItem key={label}>
            <svg width="52" height="52" viewBox="0 0 52 52" fill="none" stroke="#666" strokeWidth="2.600">{art}</svg>
            {label}
          </NavItem>
        ))}
      </BottomBar>
      <SystemNav>
        <IconButton aria-label="菜单"><svg width="60" height="44" viewBox="0 0 60 44" stroke="#777" strokeWidth="5"><path d="M12 7h36M12 22h36M12 37h36" /></svg></IconButton>
        <IconButton aria-label="主页"><svg width="60" height="44" viewBox="0 0 60 44" fill="none" stroke="#777" strokeWidth="5"><rect x="13" y="4.500" width="35" height="35" rx="8" /></svg></IconButton>
        <IconButton aria-label="后退"><svg width="60" height="44" viewBox="0 0 60 44" fill="none" stroke="#777" strokeWidth="4.500" strokeLinecap="round"><path d="M40 4L21 19q-3 3 0 6l19 15" /></svg></IconButton>
      </SystemNav>
    </Page>
  );
}
